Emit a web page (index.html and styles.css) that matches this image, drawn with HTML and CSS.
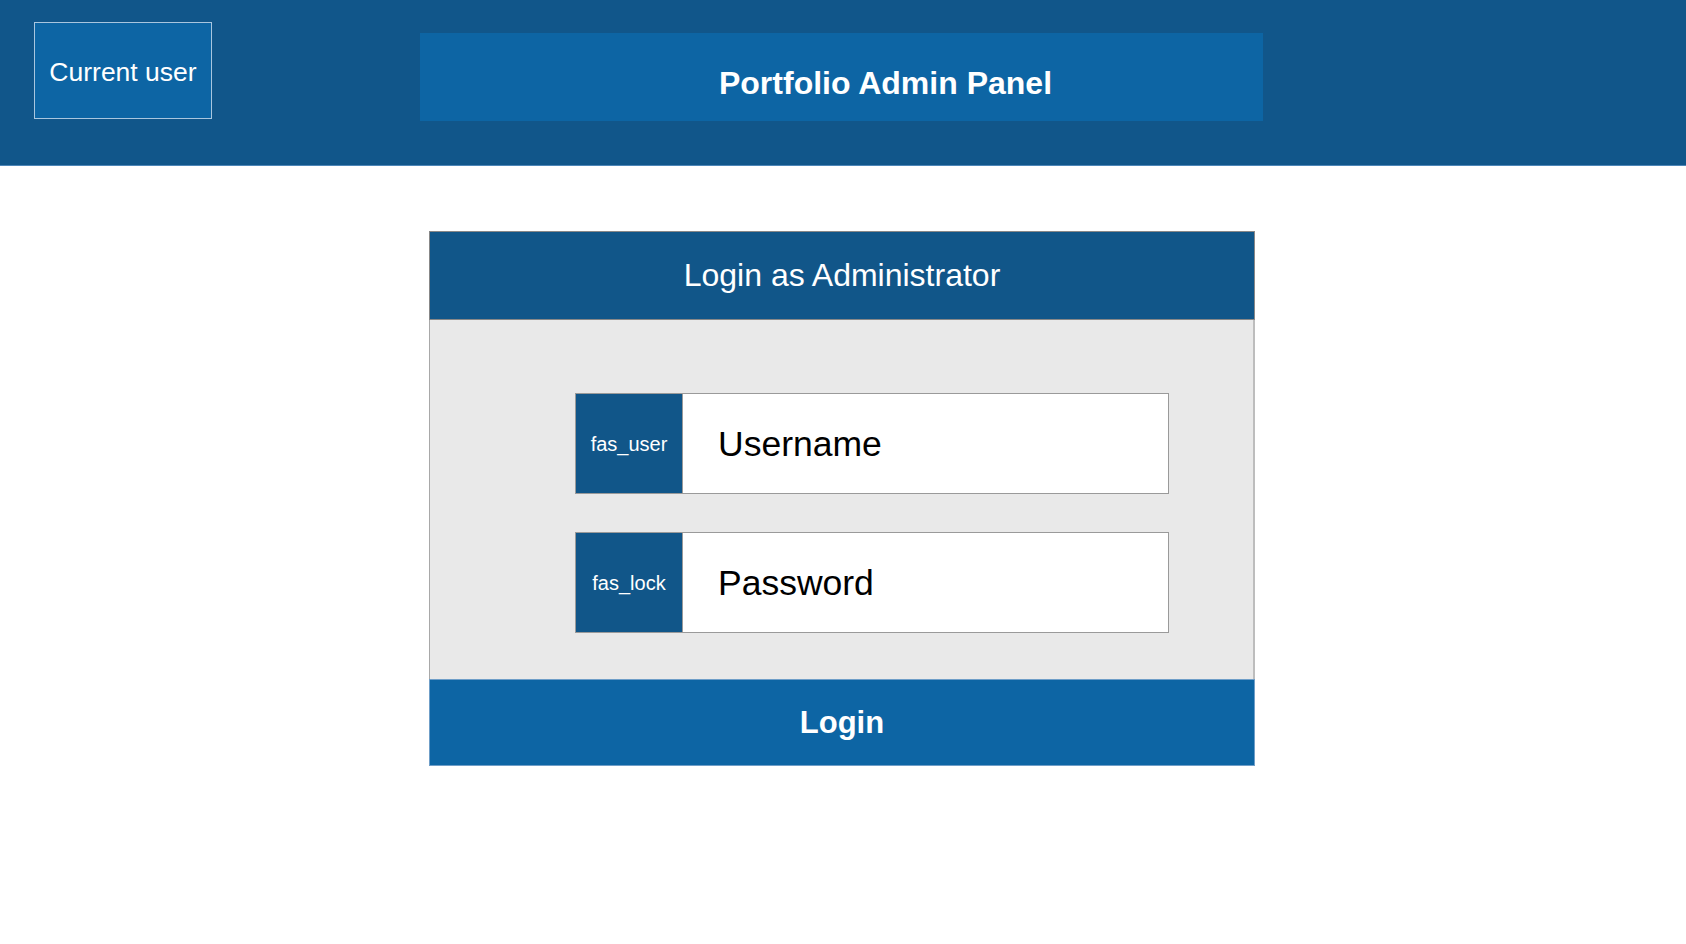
FILE: index.html
```html
<!DOCTYPE html>
<html lang="en">
<head>
<meta charset="utf-8">
<title>Portfolio Admin Panel</title>
<link rel="stylesheet" href="styles.css">
</head>
<body>
<header class="topbar">
  <div class="current-user">Current user</div>
  <div class="title-box"><h1 class="title">Portfolio Admin Panel</h1></div>
</header>
<main class="main">
  <form class="card">
    <div class="card-head">Login as Administrator</div>
    <div class="card-body">
      <label class="field">
        <span class="field-icon">fas_user</span>
        <span class="field-input">Username</span>
      </label>
      <label class="field">
        <span class="field-icon">fas_lock</span>
        <span class="field-input">Password</span>
      </label>
    </div>
    <button type="button" class="login-btn">Login</button>
  </form>
</main>
</body>
</html>
```

FILE: styles.css
```css
* { box-sizing: border-box; }

html, body {
  margin: 0;
  padding: 0;
  background: #ffffff;
  font-family: "Liberation Sans", Arial, Helvetica, sans-serif;
}

.topbar {
  height: 166px;
  background: #11568a;
  border-bottom: 1px solid #4d86b8;
  display: flex;
  align-items: flex-start;
  padding: 22px 0 0 34px;
  gap: 208px;
}

.current-user {
  width: 178px;
  height: 97px;
  background: #0d65a4;
  border: 1px solid #a9c6df;
  color: #ffffff;
  font-size: 26.5px;
  display: flex;
  align-items: center;
  justify-content: center;
  padding-top: 4px;
}

.title-box {
  width: 843px;
  height: 88px;
  margin-top: 11px;
  background: #0d65a4;
  display: flex;
  align-items: center;
  justify-content: center;
  padding: 12px 0 0 88px;
}

.title {
  margin: 0;
  color: #ffffff;
  font-size: 32px;
  font-weight: 700;
}

.main {
  padding-top: 65px;
}

.card {
  width: 826px;
  margin: 0 0 0 429px;
  display: flex;
  flex-direction: column;
}

.card-head {
  height: 89px;
  background: #115689;
  border: 1px solid #888888;
  color: #ffffff;
  font-size: 32px;
  display: flex;
  align-items: center;
  justify-content: center;
}

.card-body {
  background: #e9e9e9;
  border-left: 1px solid #a8a8a8;
  border-right: 2px solid #bdbdbd;
  padding: 73px 86px 46px 145px;
  display: flex;
  flex-direction: column;
  gap: 38px;
}

.field {
  width: 594px;
  height: 101px;
  display: flex;
  border: 1px solid #9a9a9a;
  background: #ffffff;
}

.field-icon {
  width: 107px;
  flex: none;
  background: #115689;
  border-right: 1px solid #9a9a9a;
  color: #ffffff;
  font-size: 20px;
  display: flex;
  align-items: center;
  justify-content: center;
  padding-top: 2px;
}

.field-input {
  flex: 1;
  display: flex;
  align-items: center;
  padding-left: 35px;
  padding-top: 2px;
  color: #000000;
  font-size: 35.5px;
}

.login-btn {
  height: 87px;
  width: 100%;
  margin: 0;
  background: #0d65a4;
  border: 1px solid #6f9ec8;
  color: #ffffff;
  font-family: "Liberation Sans", Arial, Helvetica, sans-serif;
  font-size: 31px;
  font-weight: 700;
  padding: 0;
}
```
